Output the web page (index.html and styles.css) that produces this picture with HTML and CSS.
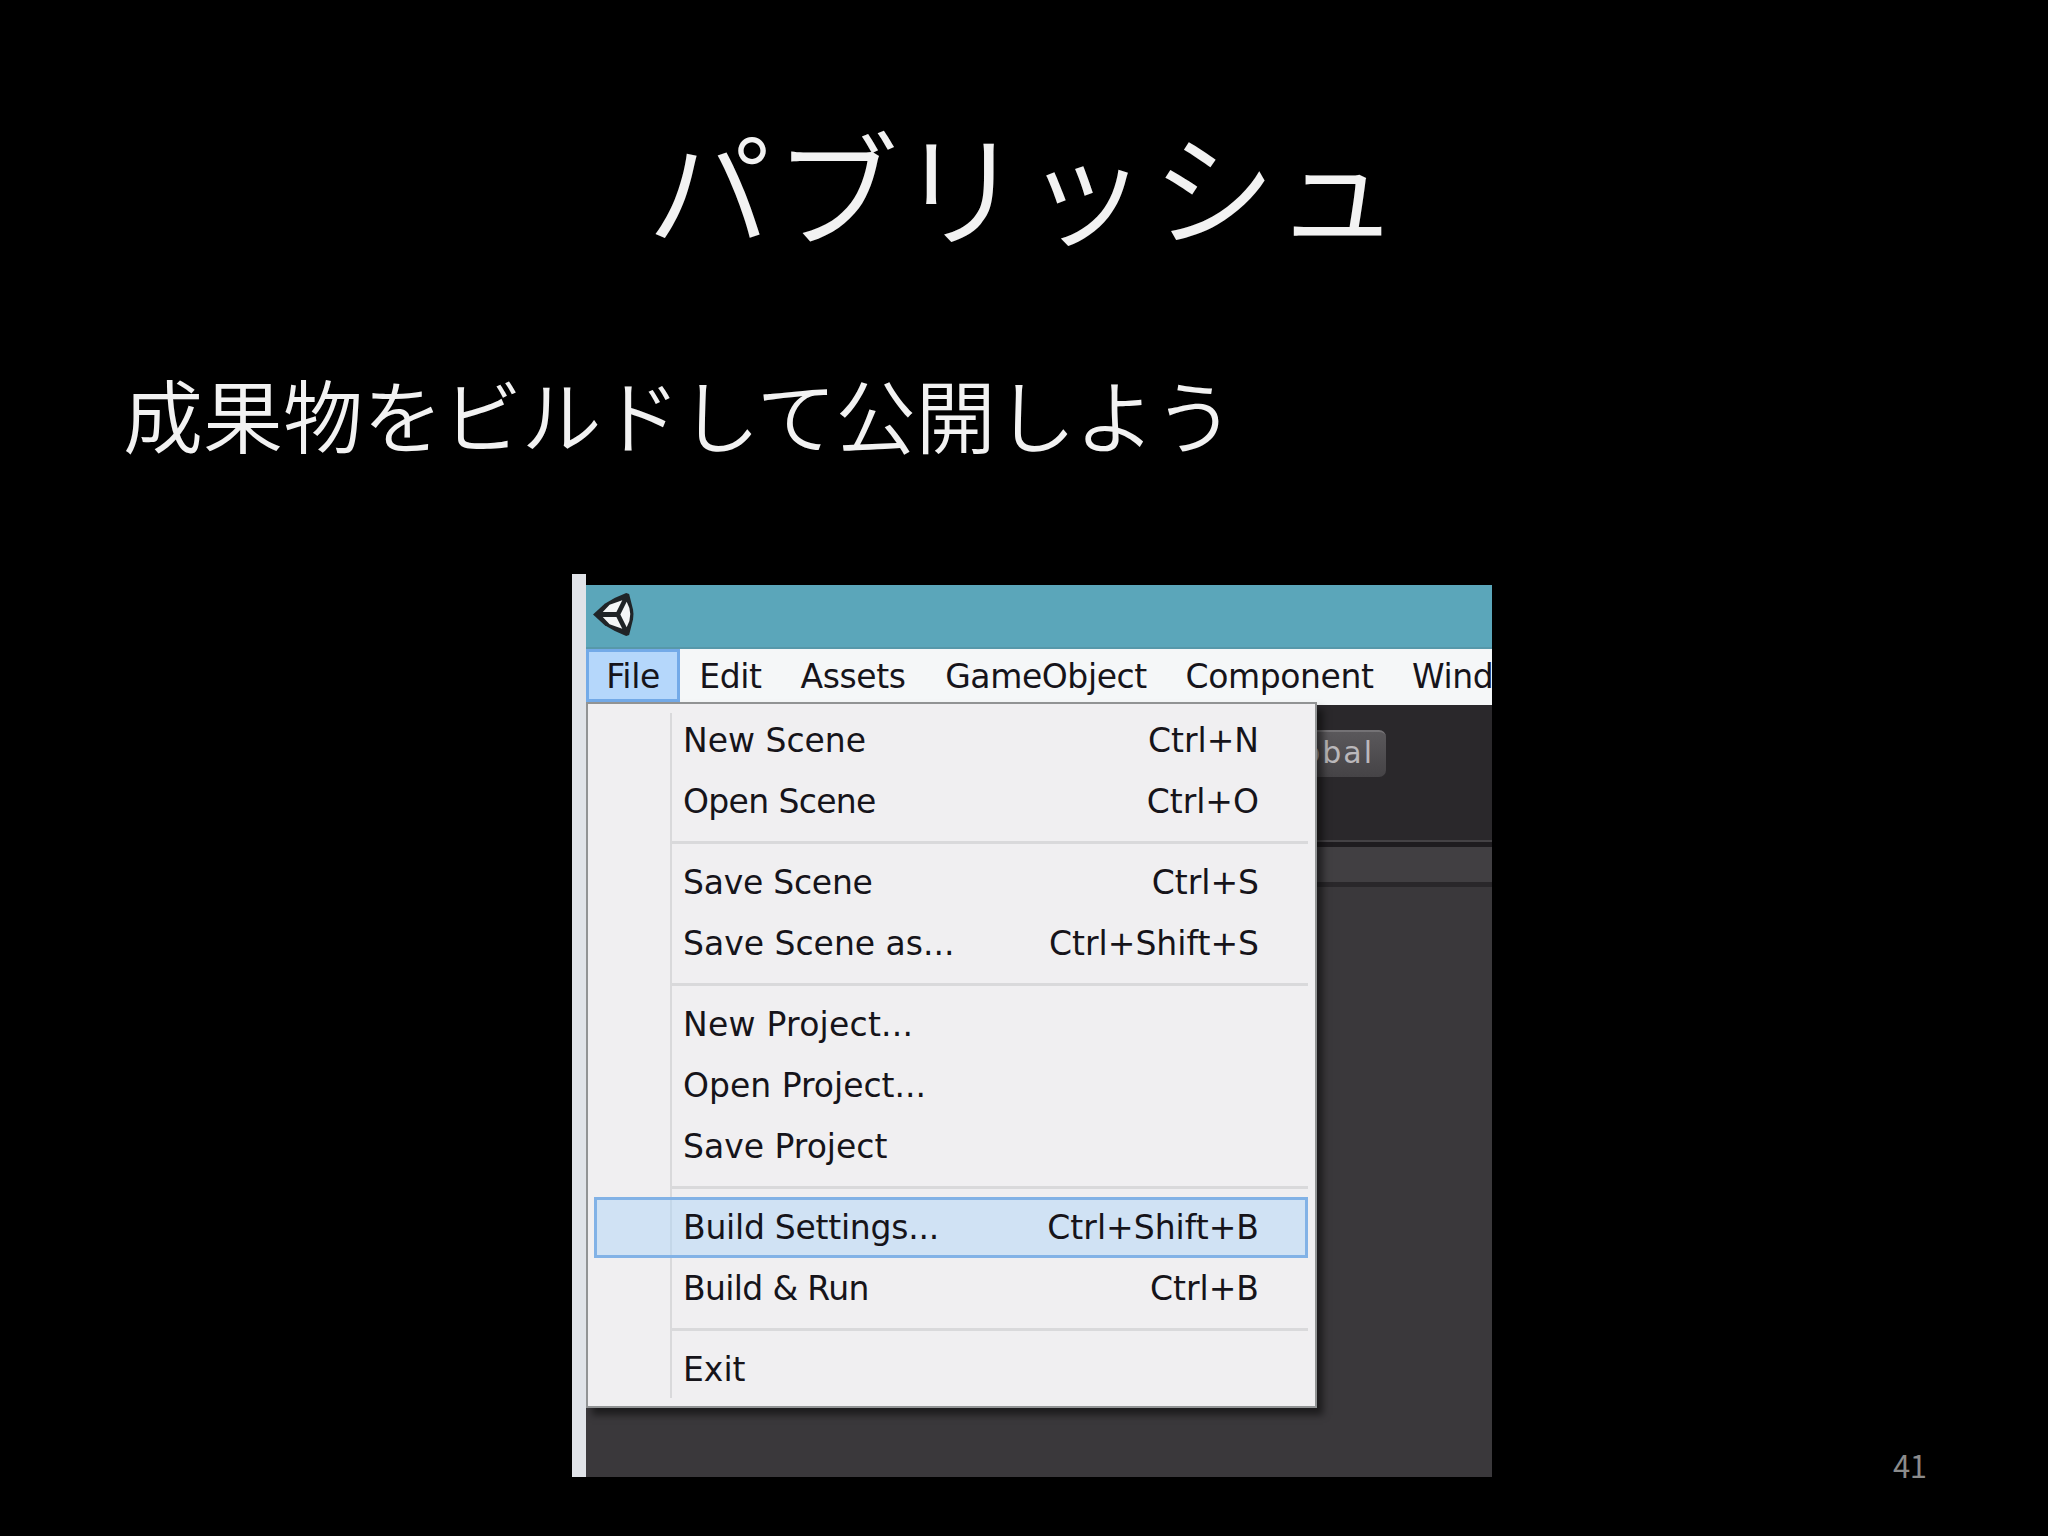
FILE: index.html
```html
<!DOCTYPE html>
<html lang="ja">
<head>
<meta charset="utf-8">
<title>パブリッシュ</title>
<link rel="stylesheet" href="styles.css">
</head>
<body>
<main class="slide">
  <h1 class="title"><span class="pa">パ</span><span class="bu">ブ</span>リ<span class="small-tsu">ッ</span><span class="shi">シ</span>ュ</h1>
  <p class="lead"><span class="kanji">成果物</span><span class="kana">をビルドして</span><span class="kanji">公開</span><span class="kana">しよう</span></p>
  <div class="capture">
    <div class="edge"></div>
    <div class="window">
      <div class="titlebar">
        <svg class="logo" viewBox="0 0 42 44">
          <path d="M0 22 L12 11 Q23 4 34 0 L37 1 L41 17 Q42 22 41 27 L37 43 L34 44 Q23 40 12 33 Z" fill="#202427"/>
          <path d="M10 19.500 L17 12 L30 7.500 L24 19.500 Z M10 24.500 L24 24.500 L30 36.500 L17 32 Z M34.500 9 Q42 22 34.500 35 L28 22 Z" fill="#f4f6f7"/>
        </svg>
      </div>
      <nav class="menubar">
        <span class="menu file">File</span><span class="menu edit">Edit</span><span class="menu assets">Assets</span><span class="menu gameobject">GameObject</span><span class="menu component">Component</span><span class="menu wind">Wind</span>
      </nav>
      <div class="workspace">
        <div class="toolbar"><span class="global">Global</span></div>
        <div class="tabs"></div>
        <div class="dropdown">
          <div class="row"><span>New Scene</span><span class="key">Ctrl+N</span></div>
          <div class="row"><span class="tighter">Open Scene</span><span class="key">Ctrl+O</span></div>
          <hr class="sep">
          <div class="row"><span class="tight">Save Scene</span><span class="key">Ctrl+S</span></div>
          <div class="row"><span>Save Scene as...</span><span class="key">Ctrl+Shift+S</span></div>
          <hr class="sep">
          <div class="row"><span class="loose">New Project...</span></div>
          <div class="row"><span>Open Project...</span></div>
          <div class="row"><span>Save Project</span></div>
          <hr class="sep">
          <div class="row active"><span class="tight">Build Settings...</span><span class="key">Ctrl+Shift+B</span></div>
          <div class="row"><span class="tighter">Build &amp; Run</span><span class="key">Ctrl+B</span></div>
          <hr class="sep">
          <div class="row"><span>Exit</span></div>
        </div>
      </div>
    </div>
  </div>
  <footer class="page">41</footer>
</main>
</body>
</html>
```
FILE: styles.css
```css
* { box-sizing: border-box; }
body { margin: 0; background: #000; }
.slide {
  position: relative;
  width: 2048px;
  height: 1536px;
  overflow: hidden;
  background: #000;
  color: #f2f2f2;
  font-family: "Noto Sans CJK JP", sans-serif;
}
.title {
  margin: 0;
  padding: 91px 0 0 647px;
  height: 354px;
  font-size: 124px;
  line-height: 184px;
  font-weight: 350;
  letter-spacing: 1.6px;
  white-space: nowrap;
}
.pa { letter-spacing: 3.6px; }
.bu { letter-spacing: -0.4px; }
.small-tsu { letter-spacing: 4px; }
.shi { letter-spacing: -0.5px; }
.lead {
  margin: 0;
  padding-left: 123px;
  height: 220px;
  font-size: 80px;
  line-height: 116px;
  font-weight: 350;
  white-space: nowrap;
}
.kana { letter-spacing: -0.8px; }
.capture {
  display: flex;
  width: 920px;
  height: 903px;
  margin-left: 572px;
  font-family: "DejaVu Sans", sans-serif;
  font-size: 33px;
  color: #16141a;
}
.edge { width: 14px; background: #e0e3e8; }
.window {
  width: 906px;
  height: 892px;
  margin-top: 11px;
  overflow: hidden;
  background: #3a383b;
}
.titlebar { height: 64px; padding: 8px 0 0 7px; background: #5ba6ba; border-bottom: 2px solid #5798aa; }
.logo { display: block; width: 41px; height: 43px; }
.menubar { display: flex; height: 56px; background: #f5f7f8; overflow: hidden; }
.menu { flex: none; height: 53px; line-height: 56px; text-align: center; letter-spacing: -0.4px; }
.file { width: 94px; background: #b5d7fb; border: 3px solid #73aae8; line-height: 50px; }
.edit { width: 101px; }
.assets { width: 144px; }
.gameobject { width: 242px; }
.component { width: 225px; }
.wind { padding-left: 20px; }
.workspace { position: relative; height: 772px; }
.toolbar {
  display: flex;
  height: 137px;
  padding: 25px 0 0 659px;
  background: #2a282b;
}
.global {
  width: 141px;
  height: 47px;
  padding-right: 12px;
  border-radius: 7px;
  border-top: 2px solid #747275;
  background: linear-gradient(#5a585b, #454346);
  color: #bab8bb;
  font-size: 30px;
  line-height: 41px;
  letter-spacing: 2px;
  text-align: right;
}
.tabs {
  height: 45px;
  background: #413f42;
  border-top: 5px solid #1e1c1f;
  border-bottom: 5px solid #29272a;
  box-shadow: 0 -2px 0 #444245;
}
.dropdown {
  position: absolute;
  left: 0;
  top: -3px;
  width: 731px;
  height: 706px;
  padding: 6px 7px 0 6px;
  border: 2px solid #919394;
  background: linear-gradient(90deg, transparent 82px, #d9d9db 82px, #d9d9db 84px, transparent 84px) 0 9px / 100% 685px no-repeat, #f0eff1;
  box-shadow: 6px 7px 7px rgba(0, 0, 0, 0.5);
}
.row {
  display: flex;
  justify-content: space-between;
  height: 61px;
  padding: 0 46px 0 86px;
  border: 3px solid transparent;
  line-height: 55px;
  white-space: pre;
}
.tight { letter-spacing: -0.25px; }
.tighter { letter-spacing: -0.65px; }
.loose { letter-spacing: 0.25px; }
.active { background: rgba(176, 214, 248, 0.5); border-color: #82b2e6; }
.sep { height: 3px; margin: 9px 0 8px 78px; border: 0; background: #d9d9db; }
.page {
  position: absolute;
  left: 1893px;
  top: 1442px;
  font-size: 31px;
  line-height: 46px;
  letter-spacing: -0.5px;
  color: #8b8b8b;
}
```
